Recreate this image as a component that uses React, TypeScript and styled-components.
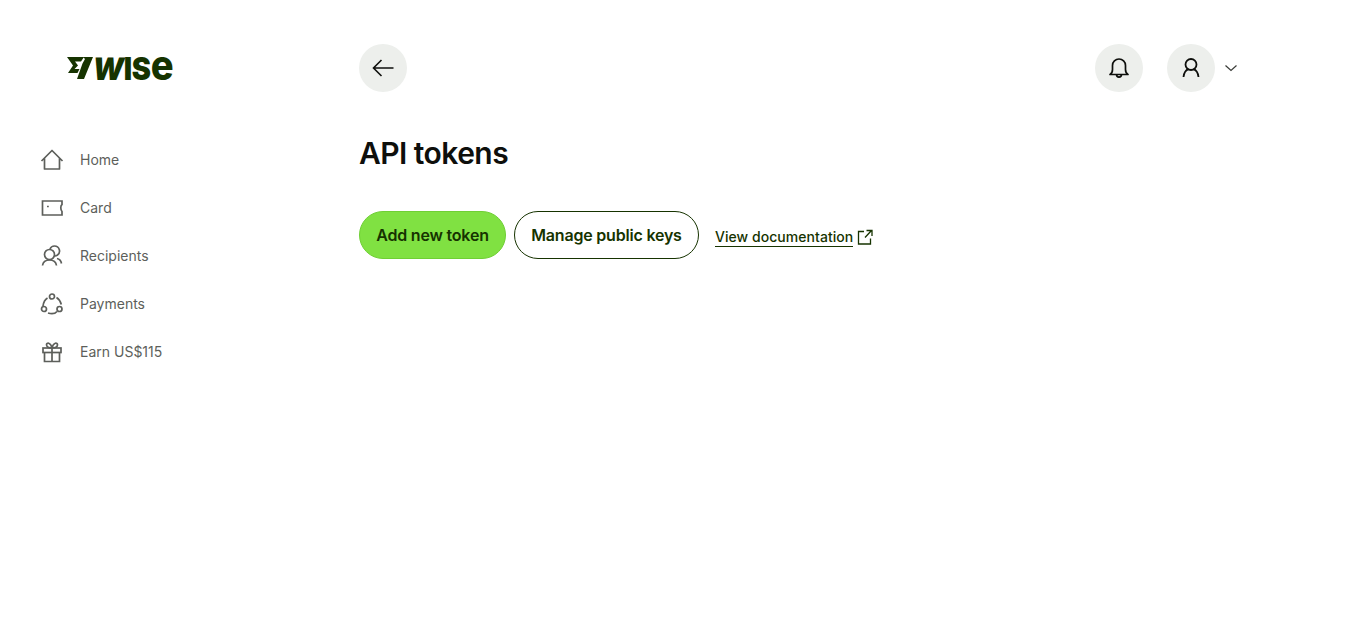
import React from "react";
import styled, { createGlobalStyle } from "styled-components";

const Global = createGlobalStyle`
  html, body { margin: 0; padding: 0; background: #fff; }
  body { font-family: Inter, "Liberation Sans", sans-serif; color: #0e0f0c; }
`;
const Page = styled.div`display: flex; min-height: 641px; align-items: flex-start;`;
const Sidebar = styled.aside`width: 359px; flex: none; padding-top: 44px; box-sizing: border-box;`;
const LogoRow = styled.div`display: flex; align-items: flex-start; height: 48px; padding: 12px 0 0 67px; box-sizing: border-box; color: #163300;`;
const FlagMark = styled.svg`flex: none; margin-top: 1px;`;
const LogoText = styled.span`display: inline-flex; align-items: baseline; width: 80px; margin-top: -3px; white-space: nowrap; font-family: Inter, sans-serif; font-weight: 900; font-size: 31px; line-height: 24px; letter-spacing: -0.4px; color: #163300; transform: scaleX(0.93); transform-origin: left center;`;
const LogoW = styled.span`display: inline-block; transform: skewX(-10deg);`;
const LogoE = styled.span`font-size: 41px; line-height: 24px; font-weight: 800; letter-spacing: 0;`;
const Nav = styled.nav`display: flex; flex-direction: column; margin-top: 44px;`;
const NavItem = styled.a`display: flex; align-items: center; height: 48px; padding-left: 40px; gap: 16px; font-size: 14px; color: #5d5f5b; line-height: 20px;`;
const NavIcon = styled.svg.attrs({ width: 24, height: 24, viewBox: "0 0 24 24", fill: "none", stroke: "#5d5f5b", strokeWidth: 1.7 })`flex: none;`;
const Main = styled.main`flex: 1; padding: 44px 127px 0 0; box-sizing: border-box;`;
const Header = styled.header`display: flex; align-items: center; justify-content: space-between;`;
const Circle = styled.button`width: 48px; height: 48px; border: 0; padding: 0; border-radius: 50%; background: #edefec; display: flex; align-items: center; justify-content: center; color: #0e0f0c;`;
const Actions = styled.div`display: flex; align-items: center; gap: 24px;`;
const Account = styled.div`display: flex; align-items: center; gap: 8px;`;
const Title = styled.h1`margin: 41px 0 0; font-size: 30px; font-weight: 600; line-height: 40px; letter-spacing: -0.55px; color: #0e0f0c;`;
const Toolbar = styled.div`display: flex; align-items: center; margin-top: 38px;`;
const Pill = styled.button<{ $primary?: boolean; $w: number }>`
  width: ${p => p.$w}px; height: 48px; border-radius: 24px; box-sizing: border-box; padding: 0; margin-right: 8px;
  font-family: Inter, sans-serif; font-size: 16px; font-weight: 600; letter-spacing: -0.2px; color: #163300;
  background: ${p => (p.$primary ? "#80e142" : "#fff")};
  border: 1px solid ${p => (p.$primary ? "#6fcf35" : "#163300")};
`;
const DocLink = styled.a`display: flex; align-items: center; gap: 4px; margin-left: 8px; margin-top: 4px; font-size: 14px; font-weight: 500; letter-spacing: 0.05px; color: #163300;`;
const DocText = styled.span`border-bottom: 1px solid #163300; line-height: 18px;`;

const items: [string, React.ReactNode][] = [
  ["Home", <path d="M1.500 13 12 2.500 22.500 13M4.500 10.500v10.500h15V10.500" strokeLinejoin="round" />],
  ["Card", <><path d="M2.500 5h19.500v3.500c-1.600 1-1.600 5.500 0 7V19H2.500z" /><path d="M7 10.500h1.800" /></>],
  ["Recipients", <><circle cx="9.500" cy="10.500" r="5" /><path d="M10 5c.8-2 2.500-3 4.500-3a5 5 0 0 1 3 9c-.7.500-1.500 1-2.500 1M2.500 21.500c.5-3.500 3-5.500 7-5.500s6.500 2 7 5.500M17 14.500c2.500.5 4 2 4.500 5" /></>],
  ["Payments", <><circle cx="12" cy="4.500" r="2.500" /><circle cx="4" cy="17" r="2.500" /><circle cx="19.500" cy="17" r="2.500" /><path d="M7.500 6C5 7.500 3.500 10.500 3 14M16.500 5.500c2.500 1.500 4 4 4.800 7M17 19.500c-2 2.300-6 2.500-9 1.500" /></>],
  ["Earn US$115", <><rect x="3" y="8" width="18" height="4.500" /><path d="M4.500 12.500V21.500h15v-9M12 8v13.500M12 8C9 8 6.500 7 6.500 4.800 6.500 2.500 10.500 2 12 8c1.500-6 5.500-5.500 5.500-3.200C17.500 7 15 8 12 8z" /></>],
];

export default function App() {
  return (
    <Page>
      <Global />
      <Sidebar>
        <LogoRow>
          <FlagMark width="26" height="22" viewBox="0 0 26 22" fill="#163300" aria-hidden>
            <path d="M0 0H17L14 4.500H8L11 8.500 7.500 12H12.500L10.500 16H1L6 8.500Z" />
            <path d="M16 0H26L17 22H10L15.500 6.500 18 2Z" />
          </FlagMark>
          <LogoText><LogoW>W</LogoW>IS<LogoE>e</LogoE></LogoText>
        </LogoRow>
        <Nav>
          {items.map(([label, icon]) => (
            <NavItem key={label}>
              <NavIcon>{icon}</NavIcon>
              {label}
            </NavItem>
          ))}
        </Nav>
      </Sidebar>
      <Main>
        <Header>
          <Circle aria-label="Back">
            <svg width="24" height="24" viewBox="0 0 24 24" fill="none" stroke="#0e0f0c" strokeWidth="1.6">
              <path d="M22.500 12H2.500M10.500 4l-8 8 8 8" />
            </svg>
          </Circle>
          <Actions>
            <Circle aria-label="Notifications">
              <svg width="24" height="24" viewBox="0 0 24 24" fill="none" stroke="#0e0f0c" strokeWidth="1.7">
                <path d="M3 18.500c1.800-1 2.500-2.500 2.500-5V9.500a6.500 6.500 0 0 1 13 0v4c0 2.500.7 4 2.500 5zM9.500 18.500c0 3.500 5 3.500 5 0" strokeLinejoin="round" />
              </svg>
            </Circle>
            <Account>
              <Circle aria-label="Account">
                <svg width="24" height="24" viewBox="0 0 24 24" fill="none" stroke="#0e0f0c" strokeWidth="1.8">
                  <circle cx="12" cy="8.500" r="5.500" />
                  <path d="M4.500 21c.5-4 2.500-7 5-7.800M19.500 21c-.5-4-2.500-7-5-7.800" />
                </svg>
              </Circle>
              <svg width="16" height="16" viewBox="0 0 16 16" fill="none" stroke="#3a3c38" strokeWidth="1.200">
                <path d="M2.500 5.500 8 10.500l5.500-5" />
              </svg>
            </Account>
          </Actions>
        </Header>
        <Title>API tokens</Title>
        <Toolbar>
          <Pill $primary $w={147}>Add new token</Pill>
          <Pill $w={185}>Manage public keys</Pill>
          <DocLink>
            <DocText>View documentation</DocText>
            <svg width="16" height="16" viewBox="0 0 16 16" fill="none" stroke="#163300" strokeWidth="1.300">
              <path d="M7 2.500H1.500v12.500h12V9.500M8 8.500 14.500 1.500M9.500 1.500h5.500V7" />
            </svg>
          </DocLink>
        </Toolbar>
      </Main>
    </Page>
  );
}
